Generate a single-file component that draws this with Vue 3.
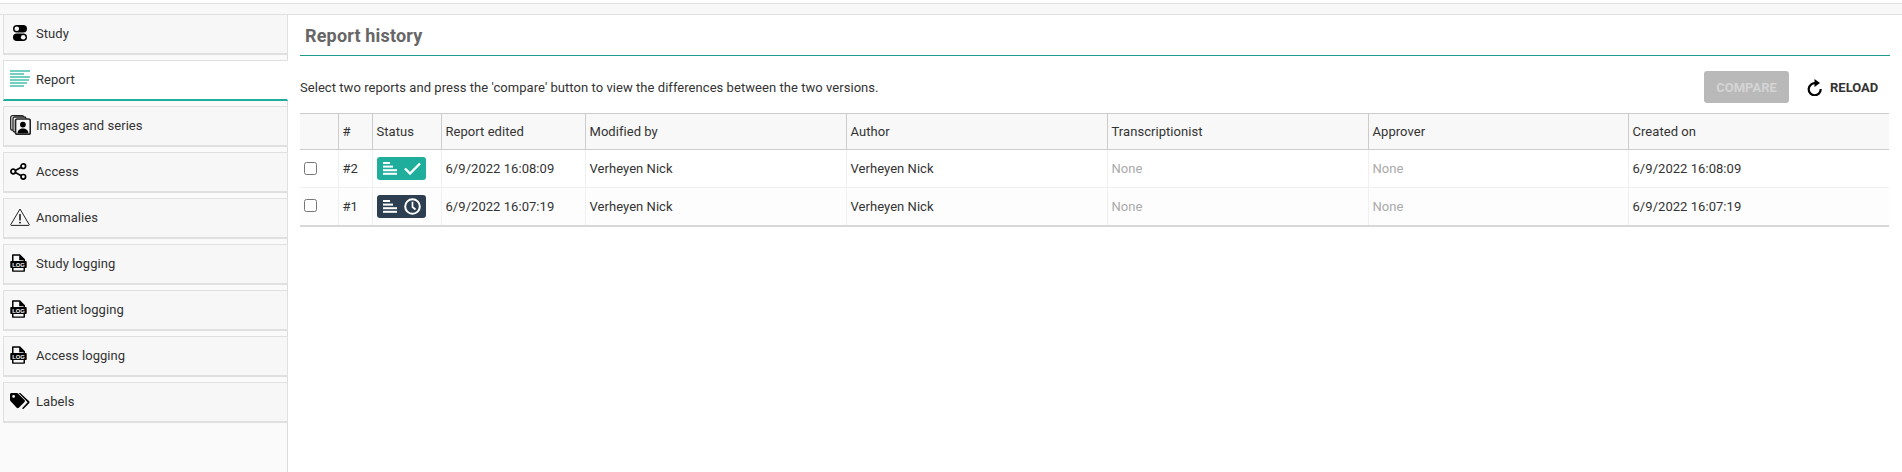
<script setup>
const tabs = [
  { label: 'Study', icon: 'toggle' },
  { label: 'Report', icon: 'report', active: true },
  { label: 'Images and series', icon: 'images' },
  { label: 'Access', icon: 'share' },
  { label: 'Anomalies', icon: 'warn' },
  { label: 'Study logging', icon: 'log' },
  { label: 'Patient logging', icon: 'log' },
  { label: 'Access logging', icon: 'log' },
  { label: 'Labels', icon: 'tags' },
]
const columns = ['', '#', 'Status', 'Report edited', 'Modified by', 'Author', 'Transcriptionist', 'Approver', 'Created on']
const widths = [38, 34, 69, 144, 261, 261, 261, 260, 261]
const rows = [
  { n: '#2', state: 'done', edited: '6/9/2022 16:08:09' },
  { n: '#1', state: 'wait', edited: '6/9/2022 16:07:19' },
]
</script>

<template>
  <div class="page">
    <div class="strip"></div>
    <div class="main">
      <aside class="side">
        <div v-for="t in tabs" :key="t.label" class="tab" :class="{ active: t.active }">
          <span class="ico">
            <svg v-if="t.icon === 'toggle'" width="20" height="18" viewBox="0 0 20 18">
              <rect x="3" y="1" width="14" height="7.500" rx="3.750" fill="#000" />
              <circle cx="6.800" cy="4.750" r="2.300" fill="#f7f7f7" />
              <rect x="3" y="9.500" width="14" height="7.500" rx="3.750" fill="#000" />
              <circle cx="13.200" cy="13.250" r="2.300" fill="#f7f7f7" />
            </svg>
            <svg v-else-if="t.icon === 'report'" width="20" height="18" viewBox="0 0 20 18" fill="#74cfc1">
              <rect x="0" y="0" width="20" height="2" />
              <rect x="0" y="3" width="14" height="2" />
              <rect x="0" y="6" width="20" height="2" />
              <rect x="0" y="9" width="19" height="2" />
              <rect x="0" y="12" width="17" height="2" />
              <rect x="0" y="15" width="14" height="2" />
            </svg>
            <svg v-else-if="t.icon === 'images'" width="21" height="20" viewBox="0 0 21 20" fill="none" stroke="#222" stroke-width="1.300">
              <rect x="0.700" y="0.700" width="13" height="14.500" rx="1.800" />
              <rect x="3" y="2" width="13" height="15" rx="1.800" fill="#f7f7f7" />
              <rect x="5.500" y="4" width="14.800" height="15.300" rx="1.800" fill="#f7f7f7" stroke-width="1.700" />
              <circle cx="12.900" cy="9.600" r="2.900" fill="#000" stroke="none" />
              <path d="M7.500 18.500c0-3.200 2.500-5 5.400-5s5.500 1.800 5.500 5z" fill="#000" stroke="none" />
            </svg>
            <svg v-else-if="t.icon === 'share'" width="17" height="17" viewBox="0 0 17 17" fill="none" stroke="#000" stroke-width="1.700">
              <circle cx="3.200" cy="8.500" r="2.300" />
              <circle cx="13.300" cy="3.200" r="2.300" />
              <circle cx="13.300" cy="13.800" r="2.300" />
              <path d="M5.300 7.400l6-3.100M5.300 9.600l6 3.100" />
            </svg>
            <svg v-else-if="t.icon === 'warn'" width="20" height="18" viewBox="0 0 20 18" fill="none">
              <path d="M10 1L.8 16.600c-.2.400 0 .8.400.8h17.600c.4 0 .6-.4.400-.8z" stroke="#222" stroke-width="1" stroke-linejoin="round" />
              <path d="M10 6v6.500" stroke="#000" stroke-width="1.400" />
              <circle cx="10" cy="14.600" r=".9" fill="#000" />
            </svg>
            <svg v-else-if="t.icon === 'log'" width="17" height="18" viewBox="0 0 17 18">
              <path d="M2 7V1c0-.4.300-.7.700-.7H10l5 4.900V7h-1.500V6.300H9.200V1.800H3.500V7zM2 14h1.500v2.500h10V14H15v3c0 .4-.3.7-.7.700H2.700c-.4 0-.7-.3-.7-.7z" fill="#000" />
              <rect x="0.300" y="7" width="16.400" height="7" rx="0.800" fill="#000" />
              <text x="8.500" y="12.700" text-anchor="middle" class="logtext">LOG</text>
            </svg>
            <svg v-else width="20" height="17" viewBox="0 0 20 17" fill="#000">
              <path d="M0 1.500C0 .7.700 0 1.500 0h5.300c.5 0 .9.200 1.200.500l6.500 6.500c.6.600.6 1.500 0 2.100l-5.700 5.700c-.6.600-1.500.6-2.100 0L.5 8C.2 7.700 0 7.300 0 6.800zm3.600 3.300a1.400 1.400 0 1 0 0-2.800 1.400 1.400 0 0 0 0 2.800z" fill-rule="evenodd" />
              <path d="M10.300 0l8.800 8.200c.6.600.6 1.500 0 2.100l-6 6-1-1 5.500-6.100L8.600 0z" />
            </svg>
          </span>
          <span class="label">{{ t.label }}</span>
        </div>
      </aside>
      <section class="content">
        <h1 class="title">Report history</h1>
        <div class="toolbar">
          <p class="hint">Select two reports and press the 'compare' button to view the differences between the two versions.</p>
          <button class="compare" type="button" disabled>COMPARE</button>
          <button class="reload" type="button">
            <svg width="15" height="17" viewBox="0 0 15 17" fill="none">
              <path d="M8.600 4.300A6 6 0 1 0 13.700 10" stroke="#000" stroke-width="2.200" />
              <path d="M7.500 0l5.500 4-5.500 4z" fill="#000" />
            </svg>
            RELOAD
          </button>
        </div>
        <table class="grid">
          <colgroup>
            <col v-for="(w, i) in widths" :key="i" :style="{ width: w + 'px' }" />
          </colgroup>
          <thead>
            <tr>
              <th v-for="(c, i) in columns" :key="i">{{ c }}</th>
            </tr>
          </thead>
          <tbody>
            <tr v-for="r in rows" :key="r.n">
              <td><span class="check"></span></td>
              <td>{{ r.n }}</td>
              <td>
                <span class="badge" :class="r.state">
                  <svg width="14" height="13" viewBox="0 0 14 13" fill="#fff">
                    <rect x="0" y="0" width="7" height="2" />
                    <rect x="0" y="3.600" width="10" height="2" />
                    <rect x="0" y="7.200" width="14" height="2" />
                    <rect x="0" y="10.800" width="14" height="2" />
                  </svg>
                  <svg v-if="r.state === 'done'" width="17" height="13" viewBox="0 0 17 13" fill="none">
                    <path d="M1 6.500l5 5L16 1.500" stroke="#fff" stroke-width="2.400" />
                  </svg>
                  <svg v-else width="17" height="17" viewBox="0 0 17 17" fill="none" stroke="#fff">
                    <circle cx="8.500" cy="8.500" r="7.300" stroke-width="2" />
                    <path d="M8.500 3.800V9l3 2.500" stroke-width="1.700" />
                  </svg>
                </span>
              </td>
              <td>{{ r.edited }}</td>
              <td>Verheyen Nick</td>
              <td>Verheyen Nick</td>
              <td class="none">None</td>
              <td class="none">None</td>
              <td>{{ r.edited }}</td>
            </tr>
          </tbody>
        </table>
      </section>
    </div>
  </div>
</template>

<style>
html, body { margin: 0; background: #fff; }
</style>

<style scoped>
.page {
  width: 1902px;
  height: 472px;
  overflow: hidden;
  font-family: Roboto, "Liberation Sans", sans-serif;
  font-size: 13px;
  letter-spacing: 0.05px;
  color: #333;
  display: flex;
  flex-direction: column;
}
.strip {
  position: relative;
  z-index: 1;
  height: 10px;
  margin-top: 3px;
  background: #f8f8f8;
  border-top: 1px solid #e0e0e0;
  border-bottom: 1px solid #e0e0e0;
}
.main { flex: 1; display: flex; min-height: 0; margin-top: -1px; }
.side {
  width: 288px;
  box-sizing: border-box;
  padding-left: 3px;
  background: #fafafa;
  border-right: 1px solid #dcdcdc;
}
.tab {
  box-sizing: border-box;
  height: 41px;
  margin: 0 -1px 5px 0;
  display: flex;
  align-items: center;
  background: #f7f7f7;
  border: 1px solid #e0e0e0;
  border-bottom-width: 2px;
  padding-bottom: 2px;
}
.tab.active {
  background: #fff;
  border-bottom: 2px solid #1fae9b;
  border-right-color: #fff;
}
.ico {
  width: 32px;
  padding-left: 6px;
  box-sizing: border-box;
  flex: none;
  display: flex;
  justify-content: flex-start;
  align-items: center;
  height: 22px;
}
.logtext {
  font-family: "Liberation Sans", sans-serif;
  font-size: 5.800px;
  font-weight: 700;
  letter-spacing: 0;
  fill: #f7f7f7;
}
.label { color: #333; }
.content { flex: 1; min-width: 0; padding: 0 12px; }
.title {
  margin: 0;
  height: 42px;
  box-sizing: border-box;
  border-bottom: 1px solid #1e9c8b;
  padding: 10px 0 0 5px;
  font-size: 18px;
  letter-spacing: 0.17px;
  line-height: 24px;
  font-weight: 700;
  color: #666;
}
.toolbar {
  height: 57px;
  display: flex;
  align-items: center;
  padding-top: 5px;
  box-sizing: border-box;
}
.hint { margin: 0; flex: 1; color: #333; }
.compare {
  width: 85px;
  height: 32px;
  border: 0;
  border-radius: 3px;
  background: #b9b9b9;
  color: #d4d4d4;
  font: 700 13px Roboto, sans-serif;
  padding: 0;
}
.reload {
  width: 101px;
  height: 32px;
  border: 0;
  background: none;
  color: #333;
  font: 700 13px Roboto, sans-serif;
  display: flex;
  align-items: center;
  gap: 8px;
  padding: 0 0 0 18px;
  box-sizing: border-box;
}
.grid {
  width: 1589px;
  table-layout: fixed;
  border-collapse: collapse;
  border-bottom: 2px solid #d8d8d8;
}
.grid th {
  height: 36px;
  padding: 0 4px;
  box-sizing: border-box;
  text-align: left;
  font-weight: 400;
  color: #333;
  background: #f8f8f8;
  border-top: 1px solid #ccc;
  border-bottom: 1px solid #ccc;
  border-left: 1px solid #ccc;
}
.grid th:first-child, .grid td:first-child { border-left: 0; }
.grid td {
  height: 38px;
  padding: 0 4px;
  box-sizing: border-box;
  border-left: 1px solid #f0f0f0;
  border-bottom: 1px solid #f0f0f0;
}
.grid tbody tr:nth-child(2) td { background: #fdfdfd; }
.grid .none { color: #aaa; }
.check {
  display: block;
  width: 13px;
  height: 13px;
  margin-top: -1px;
  box-sizing: border-box;
  border: 1px solid #767676;
  border-radius: 2.500px;
  background: #fff;
}
.badge {
  display: flex;
  align-items: center;
  justify-content: space-between;
  box-sizing: border-box;
  width: 49px;
  height: 23px;
  padding: 0 5px 0 6px;
  border-radius: 3px;
}
.badge.done { background: #1fae9b; }
.badge.wait { background: #2c3e50; }
</style>
